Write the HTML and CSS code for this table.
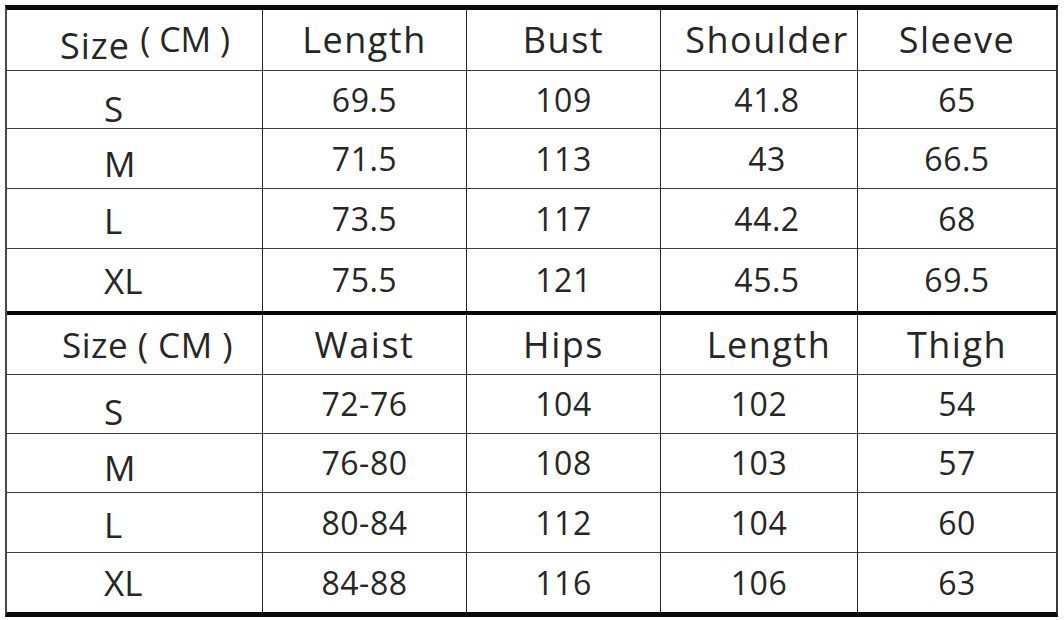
FILE: index.html
```html
<!DOCTYPE html>
<html lang="en">
<head>
<meta charset="utf-8">
<title>Size Chart</title>
<link rel="stylesheet" href="styles.css">
</head>
<body>
<div class="sheet">
  <div class="row head h1">
    <div class="cell size-head first-head"><span class="label">Size <span class="cm">( CM )</span></span></div>
    <div class="cell hd">Length</div>
    <div class="cell hd">Bust</div>
    <div class="cell hd sh">Shoulder</div>
    <div class="cell hd">Sleeve</div>
  </div>
  <div class="row r1">
    <div class="cell size">S</div>
    <div class="cell num">69.5</div>
    <div class="cell num">109</div>
    <div class="cell num sh">41.8</div>
    <div class="cell num">65</div>
  </div>
  <div class="row r2">
    <div class="cell size">M</div>
    <div class="cell num">71.5</div>
    <div class="cell num">113</div>
    <div class="cell num sh">43</div>
    <div class="cell num">66.5</div>
  </div>
  <div class="row r3">
    <div class="cell size">L</div>
    <div class="cell num">73.5</div>
    <div class="cell num">117</div>
    <div class="cell num sh">44.2</div>
    <div class="cell num">68</div>
  </div>
  <div class="row r4 split">
    <div class="cell size">XL</div>
    <div class="cell num">75.5</div>
    <div class="cell num">121</div>
    <div class="cell num sh">45.5</div>
    <div class="cell num">69.5</div>
  </div>
  <div class="row head h2">
    <div class="cell size-head second-head">Size ( CM )</div>
    <div class="cell hd">Waist</div>
    <div class="cell hd">Hips</div>
    <div class="cell hd sh">Length</div>
    <div class="cell hd">Thigh</div>
  </div>
  <div class="row r5">
    <div class="cell size">S</div>
    <div class="cell num">72-76</div>
    <div class="cell num">104</div>
    <div class="cell num">102</div>
    <div class="cell num">54</div>
  </div>
  <div class="row r6">
    <div class="cell size">M</div>
    <div class="cell num">76-80</div>
    <div class="cell num">108</div>
    <div class="cell num">103</div>
    <div class="cell num">57</div>
  </div>
  <div class="row r7">
    <div class="cell size">L</div>
    <div class="cell num">80-84</div>
    <div class="cell num">112</div>
    <div class="cell num">104</div>
    <div class="cell num">60</div>
  </div>
  <div class="row r8 last">
    <div class="cell size">XL</div>
    <div class="cell num">84-88</div>
    <div class="cell num">116</div>
    <div class="cell num">106</div>
    <div class="cell num">63</div>
  </div>
</div>
</body>
</html>
```

FILE: styles.css
```css
html, body {
  margin: 0;
  padding: 0;
  background: #ffffff;
}

body {
  font-family: "Open Sans", "Noto Sans", sans-serif;
  font-weight: 400;
  color: #262626;
}

.sheet {
  margin: 5px 0 0 5px;
  width: 1053px;
  box-sizing: border-box;
  border-top: 5px solid #0a0a0a;
  border-left: 2px solid #4a4a4a;
  border-right: 2px solid #3a3a3a;
  border-bottom: 5px solid #0a0a0a;
}

.row {
  display: grid;
  grid-template-columns: 256px 204px 194px 197px 1fr;
  box-sizing: border-box;
  border-bottom: 1px solid #3a3a3a;
}

.row.split {
  border-bottom: 4px solid #050505;
}

.row.last {
  border-bottom: none;
}

.h1 { height: 61px; }
.r1 { height: 58px; }
.r2 { height: 60px; }
.r3 { height: 60px; }
.r4 { height: 66px; }
.h2 { height: 60px; }
.r5 { height: 59px; }
.r6 { height: 59px; }
.r7 { height: 60px; }
.r8 { height: 59px; }

.cell {
  box-sizing: border-box;
  border-right: 1px solid #262626;
  display: flex;
  align-items: center;
  justify-content: center;
  line-height: 1;
  white-space: nowrap;
}

.cell:last-child {
  border-right: none;
}

.hd {
  font-size: 36px;
  letter-spacing: 1.5px;
}

.num {
  font-size: 32px;
  letter-spacing: 0.5px;
}

.size {
  font-size: 35px;
  justify-content: flex-start;
  padding-left: 97px;
}

.r1 .size { padding-top: 18px; }
.r2 .size { padding-top: 10px; }
.r3 .size { padding-top: 4px; }
.r4 .size { padding-top: 0; }
.r5 .size { padding-top: 14px; }
.r6 .size { padding-top: 8px; }
.r7 .size { padding-top: 4px; }
.r8 .size { padding-top: 0; }

.size-head {
  font-size: 36px;
  letter-spacing: 1px;
  justify-content: flex-start;
}

.first-head {
  padding-left: 53px;
  padding-top: 6px;
}

.first-head .cm {
  font-size: 34px;
  letter-spacing: 0;
  vertical-align: 7px;
}

.second-head {
  padding-left: 55px;
  font-size: 35px;
  letter-spacing: 0.5px;
}

.h1 .sh,
.r1 .sh,
.r2 .sh,
.r3 .sh,
.r4 .sh {
  padding-left: 16px;
}

.h2 .sh {
  padding-left: 20px;
}
```
